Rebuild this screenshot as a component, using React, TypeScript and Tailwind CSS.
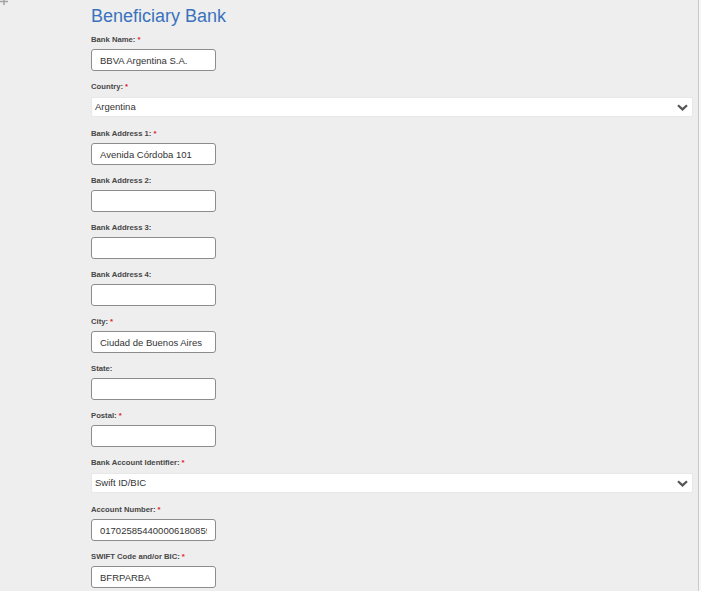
import React from "react";

type Field = {
  label: string;
  required?: boolean;
  value?: string;
  kind?: "input" | "select";
};

const fields: Field[] = [
  { label: "Bank Name:", required: true, value: "BBVA Argentina S.A." },
  { label: "Country:", required: true, value: "Argentina", kind: "select" },
  { label: "Bank Address 1:", required: true, value: "Avenida Córdoba 101" },
  { label: "Bank Address 2:" },
  { label: "Bank Address 3:" },
  { label: "Bank Address 4:" },
  { label: "City:", required: true, value: "Ciudad de Buenos Aires" },
  { label: "State:" },
  { label: "Postal:", required: true },
  { label: "Bank Account Identifier:", required: true, value: "Swift ID/BIC", kind: "select" },
  { label: "Account Number:", required: true, value: "01702585440000618085917" },
  { label: "SWIFT Code and/or BIC:", required: true, value: "BFRPARBA" },
];

function Chevron() {
  return (
    <svg width="11" height="7" viewBox="0 0 11 7" fill="none" className="shrink-0">
      <path d="M1 1.2 L5.5 5.4 L10 1.2" stroke="#555" strokeWidth="2.2" strokeLinejoin="miter" />
    </svg>
  );
}

function FormField({ field }: { field: Field }) {
  return (
    <div className="flex h-[47px] flex-col">
      <label className="h-[10px] text-[7.7px] font-bold leading-[10px] text-[#474747]">
        {field.label}
        {field.required && <span className="ml-[2px] text-[#e0262b]">*</span>}
      </label>
      {field.kind === "select" ? (
        <div className="mt-[5px] flex h-[20px] w-full items-center justify-between rounded-[2px] border border-[#e8e8e8] bg-white pl-[3px] pr-[4px]">
          <span className="text-[9.5px] text-[#333]">{field.value}</span>
          <Chevron />
        </div>
      ) : (
        <input
          readOnly
          value={field.value ?? ""}
          className="mt-[4px] h-[22px] w-[125px] rounded-[3px] border border-[#8c8c8c] bg-white px-[8px] text-[9.5px] text-[#333] outline-none"
          style={{ fontFamily: "'Liberation Sans', Arial, sans-serif" }}
        />
      )}
    </div>
  );
}

export default function App() {
  return (
    <div
      className="flex h-[591px] w-full overflow-hidden bg-[#f6f6f6]"
      style={{ fontFamily: "'Liberation Sans', Arial, sans-serif" }}
    >
      <div className="relative w-[698px] shrink-0 bg-[#eeeeee] pl-[91px] pr-[5px] pt-[5px]">
        {/* cut-off icon in the corner */}
        <svg width="9" height="6" viewBox="0 0 9 6" className="absolute left-0 top-0">
          <path d="M0 1.5 H8 M4 0 V5" stroke="#a3a3a3" strokeWidth="1.5" />
        </svg>
        <h2 className="h-[30px] text-[18px] leading-[22px] text-[#3a72bd]">Beneficiary Bank</h2>
        <div className="flex flex-col">
          {fields.map((f) => (
            <FormField key={f.label} field={f} />
          ))}
        </div>
      </div>
      <div className="w-px shrink-0 bg-[#c9c9c9]" />
      <div className="flex-1 bg-[#f6f6f6]" />
    </div>
  );
}
